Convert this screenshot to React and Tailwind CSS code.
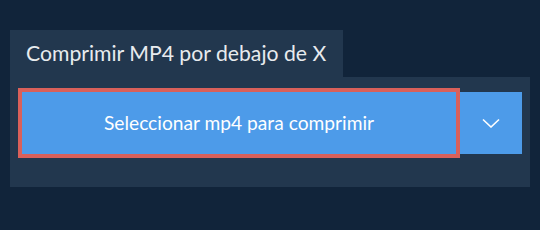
import React from 'react';

const ChevronDown = () => (
  <svg width="18" height="10" viewBox="0 0 18 10" fill="none" stroke="white" strokeWidth="1.6">
    <path d="M1 1.5 L9 9 L17 1.5" />
  </svg>
);

const App = () => {
  return (
    <div className="w-[540px] h-[230px] bg-[#11243a] pt-[30px] px-[10px] font-['Lato',sans-serif]">
      <div className="w-[333px] h-[47px] flex items-center bg-[#22374e] pl-4">
        <span className="text-[21.2px] text-[#e8ebee] leading-none">Comprimir MP4 por debajo de X</span>
      </div>
      <div className="w-[520px] h-[110px] bg-[#22374e] pt-[15px] pl-[12px]">
        <div className="flex h-[62px]">
          <button className="w-[434px] h-full bg-[#4d9be9] text-white text-[19.2px] outline-4 outline-[#d9605a] relative z-10">
            Seleccionar mp4 para comprimir
          </button>
          <button className="w-[66px] h-full bg-[#4d9be9] flex items-center justify-center pl-[4px]">
            <ChevronDown />
          </button>
        </div>
      </div>
    </div>
  );
};

export default App;
